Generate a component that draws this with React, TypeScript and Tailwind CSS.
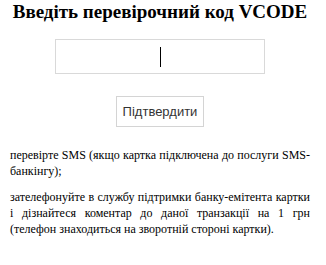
import React from 'react';

const App: React.FC = () => {
  return (
    <div className="w-[326px] h-[265px] bg-white overflow-hidden">
      <div className="w-[320px]">
        <h1 className="text-center text-[19px] leading-[22px] font-bold text-black font-['Liberation_Serif',serif] pt-[1px]">
          Введіть перевірочний код VCODE
        </h1>
        <div className="flex justify-center mt-[16px]">
          <div className="w-[210px] h-[35px] border border-[#d9d9d9] flex items-center justify-center">
            <span className="block w-[1px] h-[20px] bg-black" />
          </div>
        </div>
        <div className="flex justify-center mt-[22px]">
          <button
            type="button"
            className="w-[88px] h-[31px] border border-[#d4d4d4] bg-white text-[13px] text-[#333333] font-['Liberation_Sans',Arial,sans-serif]"
          >
            Підтвердити
          </button>
        </div>
        <div className="mt-[20px] px-[10px] text-[12px] leading-[16px] text-black text-justify font-['Liberation_Serif',serif]">
          <p>перевірте SMS (якщо картка підключена до послуги SMS-банкінгу);</p>
          <p className="mt-[10px]">
            зателефонуйте в службу підтримки банку-емітента картки і дізнайтеся коментар до даної транзакції на 1 грн (телефон знаходиться на зворотній стороні картки).
          </p>
        </div>
      </div>
    </div>
  );
};

export default App;
